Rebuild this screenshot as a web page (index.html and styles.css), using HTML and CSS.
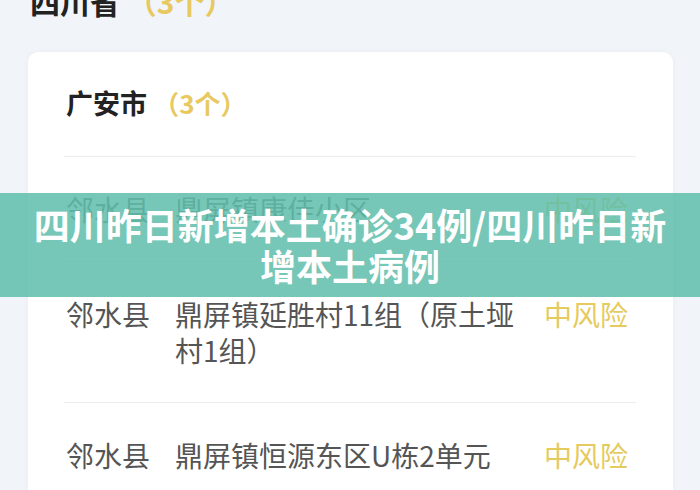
FILE: index.html
```html
<!DOCTYPE html>
<html lang="zh-CN">
<head>
    <meta charset="UTF-8">
    <meta name="viewport" content="width=device-width, initial-scale=1.0">
    <title>四川昨日新增本土确诊34例</title>
    <link rel="stylesheet" href="styles.css">
</head>
<body>
    <h1 class="province">四川省 <span class="count">（3个）</span></h1>

    <div class="card">
        <h2 class="city">广安市 <span class="count">（3个）</span></h2>
        <ul class="list">
            <li class="row">
                <span class="county">邻水县</span>
                <span class="addr">鼎屏镇康佳小区</span>
                <span class="risk">中风险</span>
            </li>
            <li class="row">
                <span class="county">邻水县</span>
                <span class="addr">鼎屏镇延胜村11组（原土垭村1组）</span>
                <span class="risk">中风险</span>
            </li>
            <li class="row">
                <span class="county">邻水县</span>
                <span class="addr">鼎屏镇恒源东区U栋2单元</span>
                <span class="risk">中风险</span>
            </li>
        </ul>
    </div>

    <div class="banner">四川昨日新增本土确诊34例/四川昨日新增本土病例</div>
</body>
</html>
```

FILE: styles.css
```css
html, body {
    overflow: hidden;
}
body {
    margin: 0;
    padding: 0 27px 0 28px;
    background: #f1f4f8;
    font-family: "Noto Sans CJK SC", "Noto Sans", sans-serif;
    color: #555;
}
.province {
    margin: -17px 0 0 2px;
    font-size: 30px;
    line-height: 36px;
    font-weight: 700;
    color: #222;
}
.count {
    color: #e8c95f;
    font-weight: 700;
}
.card {
    margin-top: 33px;
    background: #fff;
    border-radius: 10px 10px 0 0;
    padding: 33px 37px 18px 36px;
    box-shadow: 0 0 6px rgba(0, 0, 0, 0.04);
}
.city {
    margin: 0 0 0 2px;
    font-size: 27px;
    line-height: 36px;
    font-weight: 700;
    color: #222;
}
.city .count {
    font-size: 26px;
}
.list {
    list-style-type: none;
    padding: 0;
    margin: 35px 0 0;
}
.row {
    display: flex;
    align-items: flex-start;
    border-top: 1px solid #ececec;
    padding: 34px 8px 34px 2px;
    font-size: 28px;
    line-height: 36px;
}
.row:last-child {
    padding-bottom: 0;
}
.county {
    margin-right: 25px;
}
.addr {
    flex: 1;
}
.risk {
    margin-left: 12px;
    color: #e5cb5e;
}
.banner {
    position: absolute;
    left: 0;
    right: 0;
    top: 193px;
    padding: 11px 30px;
    background: rgba(96, 190, 171, 0.86);
    color: #fff;
    font-size: 36px;
    line-height: 41px;
    font-weight: 700;
    text-align: center;
}
```
